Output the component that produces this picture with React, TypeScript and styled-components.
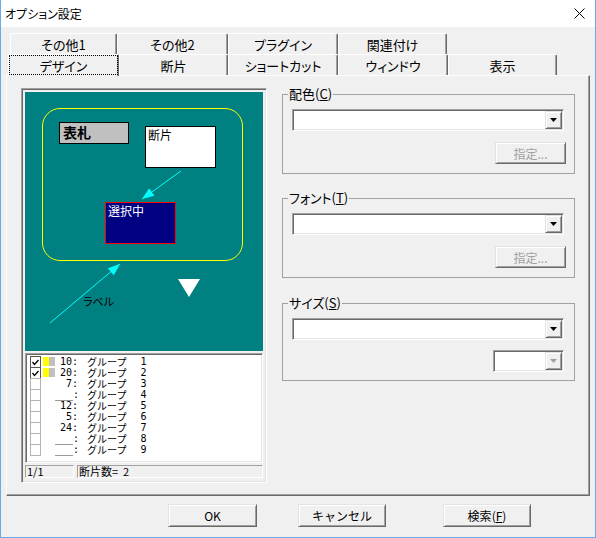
import React from "react";
import styled, { createGlobalStyle, css } from "styled-components";

const GlobalStyle = createGlobalStyle`
  * { box-sizing: border-box; }
  html, body { margin: 0; padding: 0; background: #f0f0f0; }
  body {
    font-family: "Noto Sans CJK JP", "Noto Sans", sans-serif;
    font-size: 12px;
    color: #000;
  }
`;

const proportional = css`
  font-feature-settings: "palt";
`;

const raised = css`
  border: 1px solid;
  border-color: #e3e3e3 #696969 #696969 #e3e3e3;
  box-shadow: inset 1px 1px #fff, inset -1px -1px #a0a0a0;
`;

const sunken = css`
  border: 1px solid;
  border-color: #a0a0a0 #fff #fff #a0a0a0;
  box-shadow: inset 1px 1px #696969, inset -1px -1px #e3e3e3;
`;

const Window = styled.div`
  width: 596px;
  height: 538px;
  display: flex;
  flex-direction: column;
  border: 1px solid #6caae4;
  border-top: none;
  background: #f0f0f0;
`;

const TitleBar = styled.div`
  height: 27px;
  flex: none;
  background: #fff;
  display: flex;
  align-items: center;
  justify-content: space-between;
  padding: 0 10px 0 4px;
  font-size: 12px;
  ${proportional};
`;

const Body = styled.div`
  padding: 6px 5px 0;
  display: flex;
  flex-direction: column;
`;

const TabRow = styled.div<{ $indent: number }>`
  display: flex;
  height: 21px;
  align-items: flex-end;
  padding-left: ${(p) => p.$indent}px;
`;

const Tab = styled.div<{ $w: number; $active?: boolean }>`
  width: ${(p) => p.$w}px;
  height: 21px;
  flex: none;
  display: flex;
  align-items: center;
  justify-content: center;
  font-size: 13px;
  ${proportional};
  background: #f0f0f0;
  border-top: 1px solid #fff;
  border-left: 1px solid #fff;
  border-right: 1px solid #696969;
  box-shadow: inset -1px 0 #a0a0a0;
  border-radius: 2px 2px 0 0;
  ${(p) =>
    p.$active &&
    css`
      position: relative;
      z-index: 1;
      height: 22px;
      margin-bottom: -1px;
      outline: 1px dotted #000;
      outline-offset: -2px;
    `}
`;

const Panel = styled.div`
  width: 584px;
  height: 421px;
  display: flex;
  padding: 12px 0 0 14px;
  border-top: 1px solid #fff;
  border-left: 1px solid #fff;
  border-right: 1px solid #696969;
  border-bottom: 1px solid #696969;
  box-shadow: inset -1px -1px #a0a0a0;
`;

const Well = styled.div`
  width: 246px;
  height: 395px;
  flex: none;
  display: flex;
  flex-direction: column;
  padding: 3px;
  ${sunken};
`;

const Canvas = styled.div`
  position: relative;
  height: 259px;
  flex: none;
  background: #008080;
  overflow: hidden;
`;

const Frame = styled.div`
  position: absolute;
  left: 17px;
  top: 16px;
  width: 201px;
  height: 153px;
  border: 1px solid #ffff00;
  border-radius: 18px;
`;

const Node = styled.div<{ $x: number; $y: number; $w: number; $h: number }>`
  position: absolute;
  left: ${(p) => p.$x}px;
  top: ${(p) => p.$y}px;
  width: ${(p) => p.$w}px;
  height: ${(p) => p.$h}px;
  padding: 1px 2px;
  line-height: 14px;
  font-size: 12px;
`;

const NameplateNode = styled(Node)`
  background: #c0c0c0;
  border: 1px solid #000;
  font-size: 14px;
  font-weight: bold;
  line-height: 18px;
  padding: 0 3px;
`;

const FragmentNode = styled(Node)`
  background: #fff;
  border: 1px solid #000;
`;

const SelectedNode = styled(Node)`
  background: #000080;
  border: 1px solid #ff0000;
  color: #fff;
`;

const CanvasLabel = styled.div`
  position: absolute;
  left: 58px;
  top: 202px;
  font-size: 11px;
  line-height: 14px;
  ${proportional};
`;

const Overlay = styled.svg`
  position: absolute;
  left: 0;
  top: 0;
`;

const ListBox = styled.div`
  ${sunken};
  height: 110px;
  margin-top: 2px;
  background: #fff;
  padding: 2px 0 0 4px;
`;

const Row = styled.div`
  display: flex;
  height: 11px;
  align-items: flex-start;
`;

const Check = styled.div<{ $on?: boolean }>`
  width: 11px;
  height: 12px;
  flex: none;
  background: #fff;
  border: 1px solid ${(p) => (p.$on ? "#555" : "#b4b4b4")};
  display: flex;
  align-items: center;
  justify-content: center;
`;

const Swatch = styled.div<{ $on?: boolean }>`
  width: 12px;
  height: 9px;
  margin: 1px 0 0 2px;
  flex: none;
  background: ${(p) =>
    p.$on ? "linear-gradient(90deg, #ffff00 50%, #c0c0c0 50%)" : "transparent"};
`;

const Num = styled.div`
  width: 23px;
  flex: none;
  text-align: right;
  font-family: "DejaVu Sans Mono", monospace;
  font-size: 10px;
  line-height: 11px;
`;

const GroupName = styled.div`
  margin-left: 9px;
  font-size: 10px;
  line-height: 11px;
  display: flex;
  span {
    margin-left: 14px;
    font-family: "DejaVu Sans Mono", monospace;
  }
`;

const StatusBar = styled.div`
  display: flex;
  gap: 3px;
  height: 13px;
  margin-top: 2px;
`;

const StatusCell = styled.div<{ $w?: number }>`
  ${(p) => (p.$w ? `width: ${p.$w}px; flex: none;` : "flex: 1;")}
  border: 1px solid;
  border-color: #a0a0a0 #fff #fff #a0a0a0;
  font-size: 11px;
  line-height: 11px;
  padding-left: 1px;
  white-space: pre;
`;

const RightCol = styled.div`
  width: 293px;
  margin-left: 15px;
  padding-top: 6px;
  display: flex;
  flex-direction: column;
`;

const Group = styled.div<{ $gap?: number; $bottom?: number }>`
  position: relative;
  border: 1px solid #a0a0a0;
  margin-top: ${(p) => p.$gap ?? 0}px;
  padding: 14px 10px ${(p) => p.$bottom ?? 9}px 9px;
  display: flex;
  flex-direction: column;
`;

const GroupLabel = styled.div`
  position: absolute;
  left: 5px;
  top: -9px;
  padding: 0 1px;
  background: #f0f0f0;
  font-size: 13px;
  line-height: 16px;
  ${proportional};
`;

const Combo = styled.div<{ $w?: number }>`
  ${sunken};
  height: 22px;
  width: ${(p) => (p.$w ? `${p.$w}px` : "100%")};
  align-self: flex-end;
  background: #fff;
  display: flex;
  justify-content: flex-end;
  padding: 1px;
`;

const DropButton = styled.div`
  ${raised};
  width: 17px;
  height: 18px;
  background: #f0f0f0;
  display: flex;
  align-items: center;
  justify-content: center;
`;

const ButtonLine = styled.div<{ $top: number; $right?: number }>`
  display: flex;
  justify-content: flex-end;
  margin-top: ${(p) => p.$top}px;
  margin-right: ${(p) => p.$right ?? 0}px;
`;

const Button = styled.div<{ $w: number; $h?: number; $disabled?: boolean }>`
  ${raised};
  width: ${(p) => p.$w}px;
  height: ${(p) => p.$h ?? 23}px;
  flex: none;
  display: flex;
  align-items: center;
  justify-content: center;
  font-size: 12px;
  background: #f0f0f0;
  color: ${(p) => (p.$disabled ? "#a0a0a0" : "#000")};
`;

const ButtonRow = styled.div`
  display: flex;
  padding-left: 162px;
  margin-top: 8px;
`;

const Gap = styled.div<{ $w: number }>`
  width: ${(p) => p.$w}px;
  flex: none;
`;

const arrowHead = (x1: number, y1: number, x2: number, y2: number, len = 12, half = 4.5) => {
  const dx = x2 - x1;
  const dy = y2 - y1;
  const d = Math.hypot(dx, dy);
  const ux = dx / d;
  const uy = dy / d;
  const bx = x2 - ux * len;
  const by = y2 - uy * len;
  return `${x2},${y2} ${bx - uy * half},${by + ux * half} ${bx + uy * half},${by - ux * half}`;
};

const Arrow = ({ x1, y1, x2, y2 }: { x1: number; y1: number; x2: number; y2: number }) => (
  <>
    <line x1={x1} y1={y1} x2={x2} y2={y2} stroke="#00ffff" strokeWidth={1} />
    <polygon points={arrowHead(x1, y1, x2, y2)} fill="#00ffff" />
  </>
);

const DownArrow = ({ disabled }: { disabled?: boolean }) => (
  <svg width="7" height="4" viewBox="0 0 7 4">
    <polygon points="0,0 7,0 3.5,4" fill={disabled ? "#a0a0a0" : "#000"} />
  </svg>
);

const CheckMark = () => (
  <svg width="7" height="7" viewBox="0 0 7 7">
    <polyline points="0.5,3 2.5,5.5 6.5,1" fill="none" stroke="#000" strokeWidth={1.3} />
  </svg>
);

const groups = [
  { on: true, num: "10", n: 1 },
  { on: true, num: "20", n: 2 },
  { num: "7", n: 3 },
  { num: "___", n: 4 },
  { num: "12", n: 5 },
  { num: "5", n: 6 },
  { num: "24", n: 7 },
  { num: "___", n: 8 },
  { num: "___", n: 9 },
];

const Mnemonic = ({ label, k }: { label: string; k: string }) => (
  <>
    {label}(<u>{k}</u>)
  </>
);

export default function App() {
  return (
    <>
      <GlobalStyle />
      <Window>
        <TitleBar>
          <span>オプション設定</span>
          <svg width="11" height="11" viewBox="0 0 11 11">
            <path d="M0.5 0.5 L10.5 10.5 M10.5 0.5 L0.5 10.5" stroke="#000" strokeWidth={1} />
          </svg>
        </TitleBar>
        <Body>
          <TabRow $indent={4}>
            <Tab $w={107}>その他1</Tab>
            <Tab $w={111}>その他2</Tab>
            <Tab $w={110}>プラグイン</Tab>
            <Tab $w={109}>関連付け</Tab>
          </TabRow>
          <TabRow $indent={2}>
            <Tab $w={111} $active>
              デザイン
            </Tab>
            <Tab $w={109}>断片</Tab>
            <Tab $w={110}>ショートカット</Tab>
            <Tab $w={110}>ウィンドウ</Tab>
            <Tab $w={109}>表示</Tab>
          </TabRow>
          <Panel>
            <Well>
              <Canvas>
                <Frame />
                <NameplateNode $x={34} $y={30} $w={70} $h={22}>
                  表札
                </NameplateNode>
                <FragmentNode $x={120} $y={34} $w={71} $h={42}>
                  断片
                </FragmentNode>
                <SelectedNode $x={80} $y={110} $w={71} $h={42}>
                  選択中
                </SelectedNode>
                <CanvasLabel>ラベル</CanvasLabel>
                <Overlay width="236" height="259">
                  <Arrow x1={156} y1={79} x2={117} y2={107} />
                  <Arrow x1={25} y1={231} x2={95} y2={172} />
                  <polygon points="153,187 175,187 164,205" fill="#fff" />
                </Overlay>
              </Canvas>
              <ListBox>
                {groups.map((g) => (
                  <Row key={g.n}>
                    <Check $on={g.on}>{g.on && <CheckMark />}</Check>
                    <Swatch $on={g.on} />
                    <Num>{g.num}:</Num>
                    <GroupName>
                      グループ<span>{g.n}</span>
                    </GroupName>
                  </Row>
                ))}
              </ListBox>
              <StatusBar>
                <StatusCell $w={49}>1/1</StatusCell>
                <StatusCell>断片数=  2</StatusCell>
              </StatusBar>
            </Well>
            <RightCol>
              <Group>
                <GroupLabel>
                  <Mnemonic label="配色" k="C" />
                </GroupLabel>
                <Combo>
                  <DropButton>
                    <DownArrow />
                  </DropButton>
                </Combo>
                <ButtonLine $top={11} $right={-2}>
                  <Button $w={71} $h={22} $disabled>
                    指定...
                  </Button>
                </ButtonLine>
              </Group>
              <Group $gap={24}>
                <GroupLabel>
                  <Mnemonic label="フォント" k="T" />
                </GroupLabel>
                <Combo>
                  <DropButton>
                    <DownArrow />
                  </DropButton>
                </Combo>
                <ButtonLine $top={11} $right={-2}>
                  <Button $w={71} $h={22} $disabled>
                    指定...
                  </Button>
                </ButtonLine>
              </Group>
              <Group $gap={25} $bottom={8}>
                <GroupLabel>
                  <Mnemonic label="サイズ" k="S" />
                </GroupLabel>
                <Combo>
                  <DropButton>
                    <DownArrow />
                  </DropButton>
                </Combo>
                <ButtonLine $top={10}>
                  <Combo $w={71}>
                    <DropButton>
                      <DownArrow disabled />
                    </DropButton>
                  </Combo>
                </ButtonLine>
              </Group>
            </RightCol>
          </Panel>
          <ButtonRow>
            <Button $w={89}>OK</Button>
            <Gap $w={41} />
            <Button $w={88}>キャンセル</Button>
            <Gap $w={57} />
            <Button $w={88}>
              <Mnemonic label="検索" k="F" />
            </Button>
          </ButtonRow>
        </Body>
      </Window>
    </>
  );
}
